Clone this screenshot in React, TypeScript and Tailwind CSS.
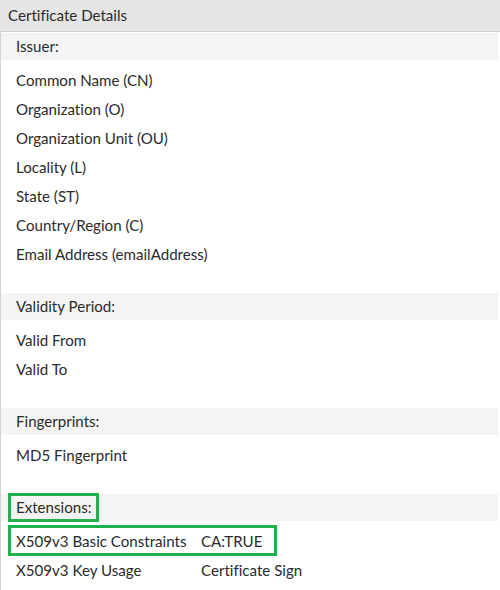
import { FC } from "react";

interface Row {
  label: string;
  value?: string;
}

interface Section {
  title: string;
  rows: Row[];
}

const sections: Section[] = [
  {
    title: "Issuer:",
    rows: [
      { label: "Common Name (CN)" },
      { label: "Organization (O)" },
      { label: "Organization Unit (OU)" },
      { label: "Locality (L)" },
      { label: "State (ST)" },
      { label: "Country/Region (C)" },
      { label: "Email Address (emailAddress)" },
    ],
  },
  {
    title: "Validity Period:",
    rows: [{ label: "Valid From" }, { label: "Valid To" }],
  },
  {
    title: "Fingerprints:",
    rows: [{ label: "MD5 Fingerprint" }],
  },
  {
    title: "Extensions:",
    rows: [
      { label: "X509v3 Basic Constraints", value: "CA:TRUE" },
      { label: "X509v3 Key Usage", value: "Certificate Sign" },
    ],
  },
];

const SectionBlock: FC<{ section: Section }> = ({ section }) => (
  <div>
    <div className="h-[27px] mr-[2px] flex items-center pl-[15px] bg-[#f4f4f4]">
      {section.title}
    </div>
    <div className="pt-[6px] pb-[24px]">
      {section.rows.map((row) => (
        <div key={row.label} className="h-[29px] flex items-center pl-[15px] whitespace-nowrap">
          <span className="w-[185px] shrink-0">{row.label}</span>
          {row.value && <span>{row.value}</span>}
        </div>
      ))}
    </div>
  </div>
);

export default function App() {
  return (
    <div
      className="relative w-[500px] h-[590px] overflow-hidden bg-white text-[15.1px] text-[#2b2b2b] [font-variant-ligatures:none]"
      style={{ fontFamily: "Lato, 'Open Sans', sans-serif" }}
    >
      <div className="h-[32px] flex items-center pl-2 bg-[#e5e5e5] border-b border-[#cfcfcf]">
        Certificate Details
      </div>
      <div className="pt-[1px] border-l border-[#d4d4d4]">
        {sections.map((s) => (
          <SectionBlock key={s.title} section={s} />
        ))}
      </div>

      {/* annotation boxes */}
      <div className="absolute left-[8px] top-[493px] w-[91px] h-[29px] border-[3px] border-[#21b14c]" />
      <div className="absolute left-[8px] top-[525px] w-[269px] h-[31px] border-[3px] border-[#21b14c]" />
    </div>
  );
}
